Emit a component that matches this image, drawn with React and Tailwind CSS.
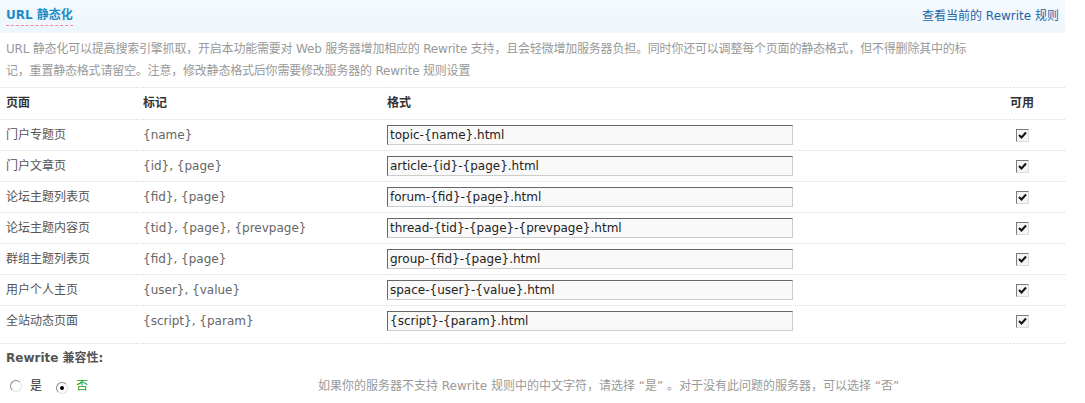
const rows = [
  { page: "门户专题页", mark: "{name}", fmt: "topic-{name}.html" },
  { page: "门户文章页", mark: "{id}, {page}", fmt: "article-{id}-{page}.html" },
  { page: "论坛主题列表页", mark: "{fid}, {page}", fmt: "forum-{fid}-{page}.html" },
  { page: "论坛主题内容页", mark: "{tid}, {page}, {prevpage}", fmt: "thread-{tid}-{page}-{prevpage}.html" },
  { page: "群组主题列表页", mark: "{fid}, {page}", fmt: "group-{fid}-{page}.html" },
  { page: "用户个人主页", mark: "{user}, {value}", fmt: "space-{user}-{value}.html" },
  { page: "全站动态页面", mark: "{script}, {param}", fmt: "{script}-{param}.html" },
];

function Check() {
  return (
    <span className="inline-flex h-[13px] w-[13px] items-center justify-center border border-t-[#7a7a7a] border-l-[#7a7a7a] border-b-[#dcdcdc] border-r-[#dcdcdc] bg-[#f4f4f4]">
      <svg width="9" height="8" viewBox="0 0 9 8">
        <path d="M1 4 L3.5 6.5 L8 1.5" fill="none" stroke="#111" strokeWidth="2" />
      </svg>
    </span>
  );
}

function Radio({ on }) {
  return (
    <span className="inline-flex h-[12px] w-[12px] items-center justify-center rounded-full border border-t-[#8a8a8a] border-l-[#8a8a8a] border-b-[#e0e0e0] border-r-[#e0e0e0] bg-white">
      {on && <span className="h-[4px] w-[4px] rounded-full bg-black" />}
    </span>
  );
}

export default function App() {
  return (
    <div
      className="w-[1085px] bg-white text-[12px] text-[#333]"
      style={{ fontFamily: '"DejaVu Sans", "Noto Sans CJK SC", sans-serif' }}
    >
      <div className="w-[1065px]">
        {/* Title bar */}
        <div className="flex h-[33px] items-center justify-between bg-gradient-to-b from-[#f5fafe] to-[#eef6fc] px-[6px] border-b border-[#f4f8fb]">
          <h3 className="border-b border-dashed border-[#f08a9e] pb-[1px] text-[12px] font-bold leading-[18px] text-[#1b8dc8]">
            URL 静态化
          </h3>
          <a className="text-[12px] text-[#2366a8]">查看当前的 Rewrite 规则</a>
        </div>

        {/* Description */}
        <div className="w-[1000px] px-[6px] pt-[5px] pb-[5px] text-[12px] leading-[22px] tracking-[-0.2px] text-[#999]">
          URL 静态化可以提高搜索引擎抓取，开启本功能需要对 Web 服务器增加相应的 Rewrite 支持，且会轻微增加服务器负担。同时你还可以调整每个页面的静态格式，但不得删除其中的标
          <br />
          记，重置静态格式请留空。注意，修改静态格式后你需要修改服务器的 Rewrite 规则设置
        </div>

        <table className="w-full table-fixed border-collapse">
          <colgroup>
            <col className="w-[143px]" />
            <col className="w-[244px]" />
            <col />
            <col className="w-[55px]" />
          </colgroup>
          <thead>
            <tr className="h-[32px] border-y border-dotted border-[#dcdcdc] text-left">
              <th className="pb-[2px] pl-[6px] font-bold text-[#333]">页面</th>
              <th className="pb-[2px] font-bold text-[#333]">标记</th>
              <th className="pb-[2px] font-bold text-[#333]">格式</th>
              <th className="pb-[2px] font-bold text-[#333]">可用</th>
            </tr>
          </thead>
          <tbody>
            {rows.map((r, i) => {
              const last = i === rows.length - 1;
              const cell = last ? "pb-[7px]" : "";
              return (
                <tr
                  key={r.page}
                  className={`${last ? "h-[38px]" : "h-[31px]"} border-b border-dotted border-[#dcdcdc]`}
                >
                  <td className={`pl-[6px] text-[#555] ${cell}`}>{r.page}</td>
                  <td className={`text-[#666] ${cell}`}>{r.mark}</td>
                  <td className={cell}>
                    <input
                      readOnly
                      value={r.fmt}
                      className="block h-[20px] w-[406px] border border-t-[#666] border-l-[#666] border-b-[#ccc] border-r-[#ccc] bg-[#f9f9f9] px-[2px] text-[12px] text-[#222] outline-none"
                    />
                  </td>
                  <td className={`pl-[6px] ${cell}`}>
                    <Check />
                  </td>
                </tr>
              );
            })}
          </tbody>
        </table>

        {/* Rewrite compat */}
        <div className="px-[6px] pt-[5px] text-[12px] font-bold leading-[18px] text-[#555]">
          Rewrite 兼容性:
        </div>
        <div className="flex h-[38px] items-center">
          <div className="flex w-[318px] items-center pl-[10px]">
            <Radio />
            <span className="ml-[8px] text-[#333]">是</span>
            <span className="ml-[14px]">
              <Radio on />
            </span>
            <span className="ml-[8px] text-[#1a9f1a]">否</span>
          </div>
          <div className="text-[#999]">
            如果你的服务器不支持 Rewrite 规则中的中文字符，请选择 “是” 。对于没有此问题的服务器，可以选择 “否”
          </div>
        </div>
      </div>
    </div>
  );
}
